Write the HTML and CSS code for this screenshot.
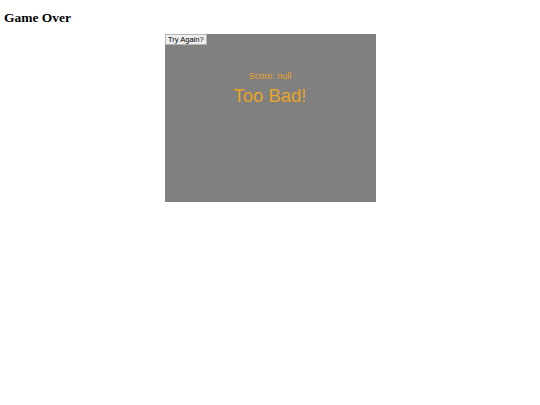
FILE: index.html
```html
<!DOCTYPE html>
<html>
<head>
<meta charset="utf-8">
<title>Game Over</title>
<link rel="stylesheet" href="styles.css">
</head>
<body>
<h2 class="title">Game Over</h2>
<div class="board">
  <button class="retry">Try Again?</button>
  <p class="score">Score: null</p>
  <p class="verdict">Too Bad!</p>
</div>
</body>
</html>
```
FILE: styles.css
```css
html, body {
  margin: 0;
  padding: 0;
  background: #ffffff;
}
body {
  padding: 0 4px;
  font-family: "Liberation Serif", "Times New Roman", serif;
}
.title {
  font-family: "Liberation Serif", "Times New Roman", serif;
  font-size: 13.5px;
  font-weight: bold;
  line-height: 15.5px;
  margin: 9.5px 0 9px;
  color: #000;
}
.board {
  width: 211px;
  height: 168px;
  margin: 0 auto;
  background: #808080;
  display: flex;
  flex-direction: column;
  align-items: center;
}
.retry {
  align-self: flex-start;
  font-family: "Liberation Sans", Arial, sans-serif;
  font-size: 7.5px;
  line-height: 9px;
  height: 11px;
  padding: 0 2.5px;
  margin: 0;
  border: 1px solid #b4b4b4;
  border-radius: 1px;
  background: #efefef;
  color: #000;
}
.score {
  font-family: "Liberation Sans", Arial, sans-serif;
  font-size: 9px;
  line-height: 10.4px;
  margin: 26px 0 0;
  color: #e8a328;
}
.verdict {
  font-family: "Liberation Sans", Arial, sans-serif;
  font-size: 18.5px;
  line-height: 20.7px;
  margin: 5px 0 0;
  color: #e8a328;
}
```
